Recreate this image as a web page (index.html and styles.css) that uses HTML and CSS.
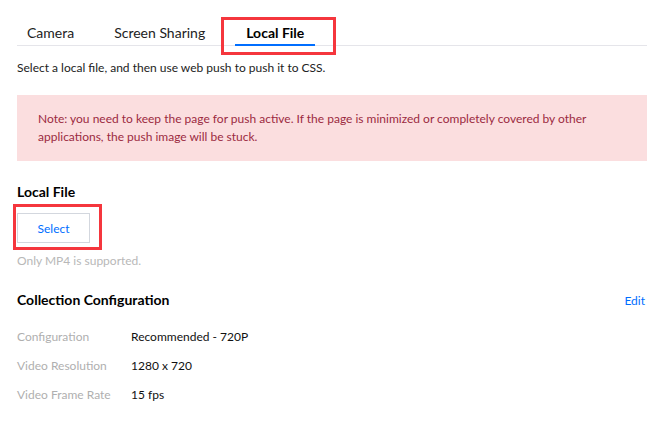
FILE: index.html
```html
<!DOCTYPE html>
<html>
<head>
<meta charset="utf-8">
<link rel="stylesheet" href="styles.css">
</head>
<body>
<div class="page">
  <div class="tabs">
    <div class="tab">Camera</div>
    <div class="tab">Screen Sharing</div>
    <div class="tab active marked">Local File</div>
  </div>
  <p class="desc">Select a local file, and then use web push to push it to CSS.</p>
  <div class="alert">Note: you need to keep the page for push active. If the page is minimized or completely covered by other applications, the push image will be stuck.</div>

  <h3 class="section-title first">Local File</h3>
  <div class="btn-row">
    <button class="btn marked-btn">Select</button>
  </div>
  <p class="hint">Only MP4 is supported.</p>

  <div class="section-head">
    <h3 class="section-title">Collection Configuration</h3>
    <a class="link">Edit</a>
  </div>
  <div class="rows">
    <div class="row"><span class="label">Configuration</span><span class="value">Recommended - 720P</span></div>
    <div class="row"><span class="label">Video Resolution</span><span class="value">1280 x 720</span></div>
    <div class="row"><span class="label">Video Frame Rate</span><span class="value">15 fps</span></div>
  </div>
</div>
</body>
</html>
```
FILE: styles.css
```css
* { box-sizing: border-box; }
html, body { margin: 0; padding: 0; background: #fff; }
body {
  font-family: Lato, "Noto Sans", "Liberation Sans", sans-serif;
  color: #000;
  font-size: 12px;
}
.page {
  width: 664px;
  padding: 21px 17px 0 17px;
}
.tabs {
  display: flex;
  gap: 20px;
  border-bottom: 1px solid #e5e5ea;
}
.tab {
  position: relative;
  font-size: 14px;
  line-height: 23px;
  padding: 0 10px;
  color: #222;
  border-bottom: 2px solid transparent;
  margin-bottom: -1px;
}
.tab.active {
  font-weight: bold;
  color: #000;
  border-bottom-color: #006eff;
  padding: 0 11px 0 11px;
}
.marked::after {
  content: "";
  position: absolute;
  left: -14px;
  right: -21px;
  top: -4px;
  bottom: -11px;
  border: 3px solid #f5363d;
}
.desc {
  margin: 12px 0 0 0;
  line-height: 20px;
  color: #222;
}
.alert {
  margin-top: 17px;
  background: #fbdedf;
  color: #9b2a3f;
  padding: 15px 20px 15px 21px;
  line-height: 18px;
}
.section-title {
  margin: 0;
  font-size: 14px;
  font-weight: bold;
  line-height: 22px;
  color: #000;
}
.section-title.first { margin-top: 20px; }
.btn-row {
  margin-top: 10px;
  display: flex;
}
.btn {
  position: relative;
  width: 73px;
  height: 30px;
  background: #fff;
  border: 1px solid #d3d7de;
  color: #006eff;
  font-family: inherit;
  font-size: 12px;
  padding: 0;
}
.marked-btn::after {
  content: "";
  position: absolute;
  left: -5px;
  right: -13px;
  top: -10px;
  bottom: -8px;
  border: 3px solid #f5363d;
}
.hint {
  margin: 8px 0 0 0;
  line-height: 20px;
  color: #b8b8b8;
}
.section-head {
  margin-top: 18px;
  display: flex;
  justify-content: space-between;
  align-items: center;
}
.link {
  color: #006eff;
  font-size: 12px;
  margin-right: 2px;
}
.rows {
  margin-top: 16px;
  display: flex;
  flex-direction: column;
  gap: 9px;
}
.row {
  display: flex;
  line-height: 20px;
}
.label {
  width: 114px;
  color: #afafaf;
}
.value {
  color: #111;
}
```
